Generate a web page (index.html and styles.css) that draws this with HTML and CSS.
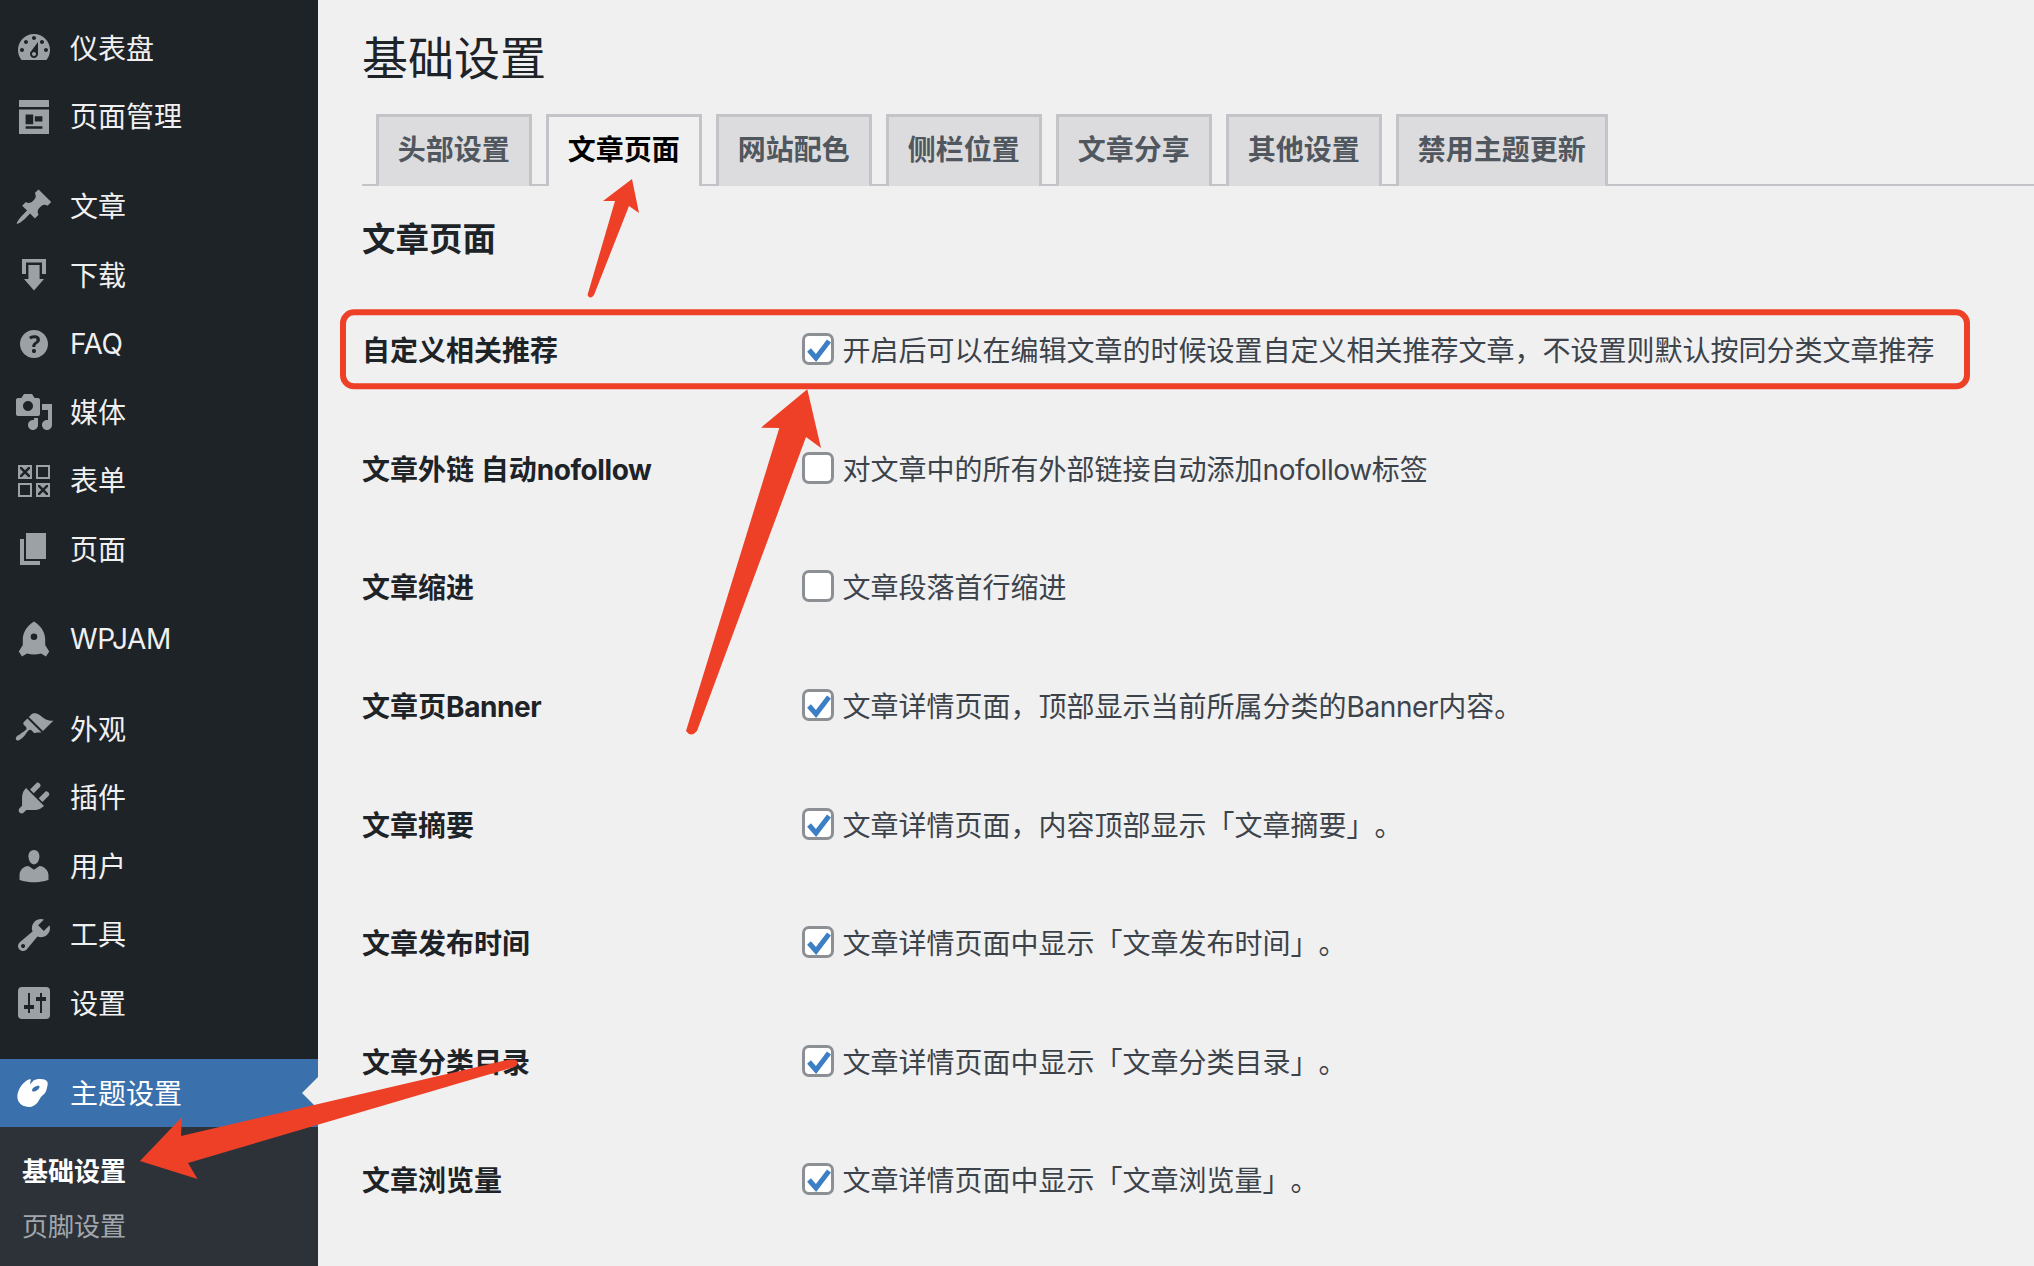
FILE: index.html
```html
<!DOCTYPE html>
<html lang="zh-CN">
<head>
<meta charset="utf-8">
<title>基础设置</title>
<link rel="stylesheet" href="styles.css">
</head>
<body>
<div class="shell">
  <nav class="sidebar">
    <ul class="menu">
      <li class="item"><svg class="icon" viewBox="0 0 20 20"><path d="M3.76 16h12.48c1.1-1.37 1.76-3.11 1.76-5 0-4.42-3.58-8-8-8s-8 3.58-8 8c0 1.89.66 3.63 1.76 5zM10 4c.55 0 1 .45 1 1s-.45 1-1 1-1-.45-1-1 .45-1 1-1zM6 6c.55 0 1 .45 1 1s-.45 1-1 1-1-.45-1-1 .45-1 1-1zm8 0c.55 0 1 .45 1 1s-.45 1-1 1-1-.45-1-1 .45-1 1-1zm-5.37 5.55L12 7v6c0 1.1-.9 2-2 2s-2-.9-2-2c0-.57.24-1.08.63-1.45zM4 10c.55 0 1 .45 1 1s-.45 1-1 1-1-.45-1-1 .45-1 1-1zm12 0c.55 0 1 .45 1 1s-.45 1-1 1-1-.45-1-1 .45-1 1-1zm-5 3c0-.55-.45-1-1-1s-1 .45-1 1 .45 1 1 1 1-.45 1-1z"/></svg><span class="name">仪表盘</span></li>
      <li class="item"><svg class="icon" viewBox="0 0 20 20"><path fill-rule="evenodd" d="M2.8 1.5h14.4a.3.3 0 0 1 .3.3V5h-15V1.8a.3.3 0 0 1 .3-.3zM2.5 6.3h15v11.9a.3.3 0 0 1-.3.3H2.8a.3.3 0 0 1-.3-.3zM5.8 8.8v4.8h3.8V8.800zM10.4 9.6v2.6h3.8V9.600zM5.800 14.600v1.300h8.400v-1.300z"/></svg><span class="name">页面管理</span></li>
    </ul>
    <ul class="menu">
      <li class="item"><svg class="icon" viewBox="0 0 20 20"><path d="M10.44 3.02l1.82-1.82 6.36 6.35-1.83 1.82c-1.05-.68-2.48-.57-3.41.36l-.75.75c-.92.93-1.04 2.35-.35 3.41l-1.83 1.82-2.41-2.41-2.8 2.79c-.42.42-3.38 2.71-3.8 2.29s1.86-3.39 2.28-3.81l2.79-2.79L4.1 9.36l1.83-1.82c1.05.69 2.48.57 3.4-.36l.75-.75c.93-.92 1.05-2.35.36-3.41z"/></svg><span class="name">文章</span></li>
      <li class="item"><svg class="icon" viewBox="0 0 20 20"><path d="M4 2h12v7.500h-2V3.700H6v5.800H4zM7.200 5h5.600v7H15l-5 5.800L5 12h2.200z"/></svg><span class="name">下载</span></li>
      <li class="item"><svg class="icon" viewBox="0 0 20 20"><path d="M17 10c0-3.870-3.140-7-7-7-3.870 0-7 3.130-7 7 0 3.860 3.130 7 7 7 3.860 0 7-3.140 7-7zm-6.300 1.480H9.140v-.43c0-.38.08-.7.24-.98s.46-.57.88-.89c.41-.29.68-.53.81-.71.14-.18.2-.39.2-.62 0-.25-.09-.44-.28-.58-.19-.13-.45-.19-.79-.19-.58 0-1.250.19-2 .57l-.64-1.280c.87-.49 1.800-.74 2.770-.74.81 0 1.450.2 1.920.58.48.39.71.91.71 1.550 0 .43-.09.8-.29 1.110-.19.32-.57.67-1.110 1.060-.38.28-.61.49-.71.63-.1.15-.15.34-.15.57v.35zm-1.470 2.740c-.18-.17-.27-.42-.27-.73 0-.33.08-.58.26-.75s.43-.25.77-.25c.32 0 .57.09.75.26s.27.42.27.74c0 .3-.09.55-.27.72-.18.18-.43.27-.75.27-.33 0-.58-.09-.76-.26z" fill-rule="evenodd"/></svg><span class="lat">FAQ</span></li>
      <li class="item"><svg class="icon" viewBox="0 0 20 20"><path d="M13 11V4c0-.55-.45-1-1-1h-1.670L9 1H5L3.670 3H2c-.55 0-1 .45-1 1v7c0 .55.45 1 1 1h10c.55 0 1-.45 1-1zM7 4.500c1.380 0 2.500 1.120 2.500 2.500S8.380 9.500 7 9.500 4.500 8.380 4.500 7 5.620 4.500 7 4.500zM14 6h5v10.500c0 1.380-1.120 2.500-2.500 2.500S14 17.880 14 16.500s1.120-2.500 2.500-2.500c.17 0 .34.02.5.05V9h-3V6zm-4 8.050V13h2v3.500c0 1.380-1.120 2.500-2.500 2.500S7 17.880 7 16.500 8.120 14 9.500 14c.17 0 .34.02.5.05z"/></svg><span class="name">媒体</span></li>
      <li class="item"><svg class="icon" viewBox="0 0 20 20"><path fill-rule="evenodd" d="M2 2h7v7H2zM3 3.900l1.600 1.600L3 7.100V8h.9l1.600-1.600L7.100 8H8v-.9L6.400 5.500 8 3.900V3h-.9L5.500 4.600 3.900 3H3zM11 2h7v7h-7zM12 3v5h5V3zM2 11h7v7H2zM3 12v5h5v-5zM11 11h7v7h-7zM12 12.900l1.600 1.600-1.600 1.600v.9h.9l1.600-1.600 1.600 1.600h.9v-.9l-1.600-1.600 1.600-1.600V12h-.9l-1.600 1.600-1.600-1.600H12z"/></svg><span class="name">表单</span></li>
      <li class="item"><svg class="icon" viewBox="0 0 20 20"><path d="M6 15V2h10v13H6zm-1 1h8v2H3V5h2v11z"/></svg><span class="name">页面</span></li>
    </ul>
    <ul class="menu">
      <li class="item"><svg class="icon" viewBox="0 0 20 20"><path fill-rule="evenodd" d="M10 1.300C13 3.200 15.600 6.200 15.600 10.200V13L17.600 16.200 16 18.700 13.500 17.200Q10 18.200 6.500 17.200L4 18.700 2.400 16.200 4.400 13V10.200C4.400 6.200 7 3.200 10 1.300zM10 7.200a1.650 1.650 0 1 0 0 3.300 1.650 1.650 0 0 0 0-3.300z"/></svg><span class="lat">WPJAM</span></li>
    </ul>
    <ul class="menu">
      <li class="item"><svg class="icon" viewBox="0 0 20 20"><path d="M14.480 11.060L7.410 3.990l1.500-1.500c.5-.56 2.300-.47 3.510.32 1.210.8 1.430 1.280 2.910 2.100 1.180.64 2.450 1.260 4.450.85zm-.71.71L6.700 4.700 4.930 6.470c-.39.39-.39 1.020 0 1.410l1.060 1.060c.39.39.39 1.030 0 1.420-.6.6-1.430 1.110-2.210 1.690-.35.26-.7.53-1.010.84C1.430 13.230.4 14.670 1.200 15.470s2.240-.23 3.580-1.570c.31-.31.58-.66.84-1.010.58-.78 1.090-1.610 1.690-2.210.39-.39 1.020-.39 1.410 0l1.060 1.060c.39.39 1.020.39 1.410 0z"/></svg><span class="name">外观</span></li>
      <li class="item"><svg class="icon" viewBox="0 0 20 20"><path d="M13.110 4.360L9.870 7.600 8 5.730l3.240-3.240c.35-.34 1.050-.2 1.560.32.52.51.66 1.210.31 1.550zm-8 1.770l.91-1.120 9.010 9.010-1.190.84c-.71.71-2.630 1.160-3.820 1.160H6.140L4.900 17.260c-.59.59-1.540.59-2.120 0-.59-.58-.59-1.530 0-2.120l1.240-1.240v-3.880c0-1.130.4-3.190 1.090-3.890zm7.260 3.970l3.240-3.240c.34-.35 1.040-.21 1.550.31.52.51.66 1.210.31 1.550l-3.240 3.250z"/></svg><span class="name">插件</span></li>
      <li class="item"><svg class="icon" viewBox="0 0 20 20"><path d="M10 9.250c-2.270 0-2.730-3.440-2.730-3.440C7 4.020 7.820 2 9.970 2c2.160 0 2.980 2.020 2.710 3.810 0 0-.41 3.440-2.680 3.440zm0 2.570L12.720 10c2.390 0 4.520 2.330 4.520 4.530v2.490s-3.650 1.130-7.240 1.130c-3.650 0-7.240-1.130-7.240-1.130v-2.490c0-2.250 1.940-4.480 4.470-4.480z"/></svg><span class="name">用户</span></li>
      <li class="item"><svg class="icon" viewBox="0 0 20 20"><path d="M16.680 9.770c-1.340 1.340-3.300 1.670-4.950.99l-5.410 6.520c-.99.99-2.590.99-3.580 0s-.99-2.590 0-3.570l6.520-5.420c-.68-1.650-.35-3.610.99-4.950 1.280-1.280 3.120-1.620 4.720-1.060l-2.890 2.890 2.820 2.820 2.860-2.870c.53 1.580.18 3.390-1.080 4.650zM3.810 16.210c.4.39 1.040.39 1.430 0 .4-.4.4-1.040 0-1.430-.39-.4-1.030-.4-1.430 0-.39.39-.39 1.030 0 1.430z"/></svg><span class="name">工具</span></li>
      <li class="item"><svg class="icon" viewBox="0 0 20 20"><path fill-rule="evenodd" d="M4 2h12a2 2 0 0 1 2 2v12a2 2 0 0 1-2 2H4a2 2 0 0 1-2-2V4a2 2 0 0 1 2-2zM7 5v6H5v2h2v2h1v-2h2v-2H8V5zM13 5v2h-2v2h2v6h1V9h2V7h-2V5z"/></svg><span class="name">设置</span></li>
    </ul>
    <ul class="menu">
      <li class="item active"><svg class="icon" viewBox="0 0 40 40"><path fill-rule="evenodd" d="M13 7.200C14.500 6.400 16 6 16.900 6.300L15.900 11.600 19.800 7.200C23 5.800 27.500 5.500 30.500 6.500 33.300 7.400 34.200 9.500 33.600 12 33 15 32.400 18.500 30.400 20.800 28.500 22.800 27 23.500 26 25.500 24.300 29 21 33.800 15.500 33.900 9.500 34 4.500 31 3.500 25.500 2.700 19.500 6 12 13 7.200zM20 14.200C18.200 15.500 17.500 17.300 18.400 18.200 19.300 19 21.300 18.600 23 17.300 25 15.900 26.100 14 25.300 13 24.500 12.200 22 12.800 20 14.200z"/></svg><span class="name">主题设置</span></li>
    </ul>
    <ul class="submenu">
      <li class="sub current">基础设置</li>
      <li class="sub">页脚设置</li>
    </ul>
  </nav>

  <main class="content">
    <h1 class="title">基础设置</h1>
    <div class="tabs">
      <a class="tab">头部设置</a>
      <a class="tab tab-active">文章页面</a>
      <a class="tab">网站配色</a>
      <a class="tab">侧栏位置</a>
      <a class="tab">文章分享</a>
      <a class="tab">其他设置</a>
      <a class="tab">禁用主题更新</a>
    </div>
    <h2 class="section">文章页面</h2>
    <div class="rows">
      <div class="row"><div class="label">自定义相关推荐</div><span class="box"><svg class="tick" viewBox="0 0 32 32"><path d="M7 17l7 8L27 8"/></svg></span><span class="desc">开启后可以在编辑文章的时候设置自定义相关推荐文章，不设置则默认按同分类文章推荐</span></div>
      <div class="row"><div class="label">文章外链 自动<span class="lat">nofollow</span></div><span class="box"></span><span class="desc">对文章中的所有外部链接自动添加<span class="lat">nofollow</span>标签</span></div>
      <div class="row"><div class="label">文章缩进</div><span class="box"></span><span class="desc">文章段落首行缩进</span></div>
      <div class="row"><div class="label">文章页<span class="lat">Banner</span></div><span class="box"><svg class="tick" viewBox="0 0 32 32"><path d="M7 17l7 8L27 8"/></svg></span><span class="desc">文章详情页面，顶部显示当前所属分类的<span class="lat">Banner</span>内容。</span></div>
      <div class="row"><div class="label">文章摘要</div><span class="box"><svg class="tick" viewBox="0 0 32 32"><path d="M7 17l7 8L27 8"/></svg></span><span class="desc">文章详情页面，内容顶部显示「文章摘要」。</span></div>
      <div class="row"><div class="label">文章发布时间</div><span class="box"><svg class="tick" viewBox="0 0 32 32"><path d="M7 17l7 8L27 8"/></svg></span><span class="desc">文章详情页面中显示「文章发布时间」。</span></div>
      <div class="row"><div class="label">文章分类目录</div><span class="box"><svg class="tick" viewBox="0 0 32 32"><path d="M7 17l7 8L27 8"/></svg></span><span class="desc">文章详情页面中显示「文章分类目录」。</span></div>
      <div class="row"><div class="label">文章浏览量</div><span class="box"><svg class="tick" viewBox="0 0 32 32"><path d="M7 17l7 8L27 8"/></svg></span><span class="desc">文章详情页面中显示「文章浏览量」。</span></div>
    </div>
  </main>

  <svg class="annotations" viewBox="0 0 2034 1266" aria-hidden="true">
    <rect class="frame" x="343" y="312.300" width="1624" height="74" rx="11"/>
    <path class="arrow" d="M632 179L639 213 629 206 594 295Q590 300 587.500 295L615 201 603 201Z"/>
    <path class="arrow" d="M807.300 389.300L821 448 806 437 697 731Q691 738 686 731L779.300 428 761 427.700Z"/>
    <path class="arrow" d="M140 1161L182 1117 181 1136 507 1060Q518 1058 518 1063 517 1066 514 1067L188 1163 197.500 1179Z"/>
  </svg>
</div>
</body>
</html>
```

FILE: styles.css
```css
* { box-sizing: border-box; }
html, body { margin: 0; padding: 0; height: 100%; overflow: hidden; }
body {
  font-family: Inter, "Noto Sans CJK SC", sans-serif;
  font-size: 28px;
  background: #f0f0f1;
  color: #3c434a;
  text-spacing-trim: space-all;
}
.shell { position: relative; display: flex; height: 1266px; }
.lat { letter-spacing: -0.4px; }

/* Sidebar */
.sidebar {
  flex: 0 0 318px;
  background: #1e2328;
  padding-top: 13.75px;
  display: flex;
  flex-direction: column;
  gap: 21.5px;
}
.menu, .submenu { list-style: none; margin: 0; padding: 0; }
.item {
  height: 68.5px;
  display: flex;
  align-items: center;
  gap: 16px;
  padding-left: 14px;
  color: #f0f0f1;
  line-height: 1;
}
.name { padding-top: 1px; }
.icon { width: 40px; height: 40px; flex: none; fill: #9ca1a6; }
.active {
  position: relative;
  background: #3a71ad;
  color: #fff;
}
.active .icon { fill: #fff; }
.active::after {
  content: "";
  position: absolute;
  right: 0;
  top: 50%;
  margin-top: -16px;
  border: 16px solid transparent;
  border-left-width: 0;
  border-right-color: #f0f0f1;
}
.submenu {
  flex: 1;
  margin-top: -21.5px;
  padding-top: 14px;
  background: #2d3239;
}
.sub {
  height: 55.5px;
  display: flex;
  align-items: center;
  padding-left: 22px;
  font-size: 26px;
  color: rgba(240, 246, 252, 0.62);
}
.current { color: #fff; font-weight: 700; }

/* Content */
.content { flex: 1; min-width: 0; padding-left: 44px; }
.title {
  margin: 0;
  height: 114px;
  padding-top: 29px;
  font-size: 46px;
  font-weight: 400;
  line-height: 58px;
  color: #1d2327;
}
.tabs {
  display: flex;
  gap: 14.5px;
  height: 72px;
  padding-left: 14px;
  border-bottom: 2px solid #c3c4c7;
}
.tab {
  height: 72px;
  padding: 0 18.75px 3px;
  display: flex;
  align-items: center;
  background: #dcdcde;
  border: 3px solid #c3c4c7;
  border-bottom: 0;
  color: #50575e;
  font-weight: 700;
  line-height: 1;
  white-space: nowrap;
}
.tab-active {
  background: #f0f0f1;
  color: #000;
}
.section {
  margin: 0;
  height: 104px;
  padding-top: 30px;
  font-size: 33.5px;
  font-weight: 700;
  line-height: 46px;
  color: #1d2327;
}
.row {
  height: 118.6px;
  display: flex;
  align-items: center;
}
.label {
  flex: 0 0 439.5px;
  font-weight: 700;
  color: #1d2327;
  white-space: nowrap;
}
.box {
  flex: none;
  width: 32px;
  height: 32px;
  margin-right: 9px;
  border: 3px solid #8c8f94;
  border-radius: 7px;
  background: #fff;
  position: relative;
}
.tick {
  position: absolute;
  left: -3px;
  top: -3px;
  width: 32px;
  height: 32px;
  fill: none;
  stroke: #3d7fc4;
  stroke-width: 5;
}
.desc { white-space: nowrap; }

/* Annotation overlay */
.annotations {
  position: absolute;
  left: 0;
  top: 0;
  width: 2034px;
  height: 1266px;
  pointer-events: none;
}
.frame { fill: none; stroke: #ee4027; stroke-width: 6; }
.arrow { fill: #ee4027; }
```
